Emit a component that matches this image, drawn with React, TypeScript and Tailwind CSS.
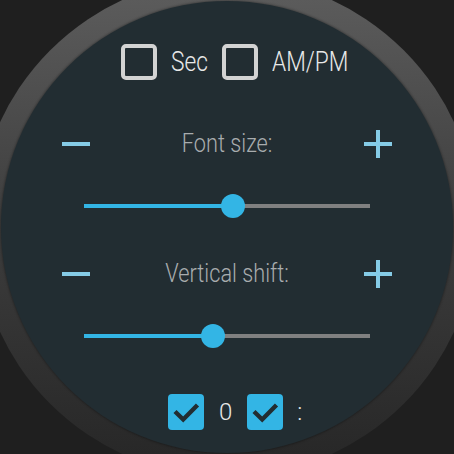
import React from 'react';

const font = { fontFamily: 'Roboto, "Liberation Sans", sans-serif' };

const EmptyBox = () => (
  <div className="w-[36px] h-[36px] rounded-[5px] border-[4px] border-[#d3d3d3] shrink-0" />
);

const CheckedBox = () => (
  <div className="w-[36px] h-[36px] rounded-[4px] bg-[#33b5e5] shrink-0">
    <svg width="36" height="36" viewBox="0 0 36 36">
      <path d="M7 17.5 L15.2 25.5 L29.5 11" fill="none" stroke="#222d32" strokeWidth="4.4" />
    </svg>
  </div>
);

const Minus = () => (
  <svg width="28" height="28" viewBox="0 0 28 28">
    <rect x="0" y="12" width="28" height="4" fill="#85cbe6" />
  </svg>
);

const Plus = () => (
  <svg width="28" height="28" viewBox="0 0 28 28">
    <rect x="0" y="12" width="28" height="4" fill="#85cbe6" />
    <rect x="12" y="0" width="4" height="28" fill="#85cbe6" />
  </svg>
);

// Control row: minus, label, plus
const StepRow = ({ label }: { label: string }) => (
  <div className="flex items-center h-[28px] pl-[61px] pr-[61px]">
    <Minus />
    <div className="flex-1 flex justify-center text-[25px] font-light text-[#a8acae] leading-none -mt-[2px] whitespace-nowrap">
      <span className="inline-block scale-x-[0.87]">{label}</span>
    </div>
    <Plus />
  </div>
);

const Slider = ({ value }: { value: number }) => (
  <div className="relative h-[24px] ml-[83px] w-[286px]">
    <div className="absolute left-0 right-0 top-[10px] h-[4px] bg-[#808080]" />
    <div className="absolute left-0 top-[10px] h-[4px] bg-[#33b5e5]" style={{ width: value }} />
    <div
      className="absolute top-0 w-[24px] h-[24px] rounded-full bg-[#33b5e5]"
      style={{ left: value - 12 }}
    />
  </div>
);

const Narrow = ({ w, children }: { w: string; children: React.ReactNode }) => (
  <span className={`${w} whitespace-nowrap text-[27px] font-light text-[#e8e8e8] leading-none`}>
    <span className="inline-block origin-left scale-x-[0.84]">{children}</span>
  </span>
);

export default function App() {
  return (
    <div className="w-[454px] h-[454px] relative overflow-hidden bg-[#1f1f1f]" style={font}>
      {/* bezel */}
      <div className="absolute left-[-23px] top-[-23px] w-[500px] h-[500px] rounded-full bg-gradient-to-b from-[#5e5e5e] via-[#3d3d3d] to-[#262626] flex items-center justify-center">
        <div className="w-[452px] h-[452px] rounded-full bg-[#222d32] shadow-[0_0_2px_1px_rgba(0,0,0,0.25)] flex flex-col">
          <div className="flex items-center h-[36px] mt-[43px] pl-[120px]">
            <EmptyBox />
            <div className="ml-[14px] w-[37px] flex">
              <Narrow w="w-[37px]">Sec</Narrow>
            </div>
            <div className="ml-[14px]">
              <EmptyBox />
            </div>
            <div className="ml-[14px] flex">
              <Narrow w="w-[76px]">AM/PM</Narrow>
            </div>
          </div>

          <div className="mt-[50px]">
            <StepRow label="Font size:" />
          </div>
          <div className="mt-[36px]">
            <Slider value={149} />
          </div>

          <div className="mt-[42px]">
            <StepRow label="Vertical shift:" />
          </div>
          <div className="mt-[36px]">
            <Slider value={129} />
          </div>

          <div className="flex items-center h-[36px] mt-[46px] pl-[167px]">
            <CheckedBox />
            <span className="ml-[15px] text-[24px] font-light text-[#e8e8e8] leading-none">0</span>
            <div className="ml-[15px]">
              <CheckedBox />
            </div>
            <span className="ml-[14px] text-[24px] font-light text-[#e8e8e8] leading-none">:</span>
          </div>
        </div>
      </div>
    </div>
  );
}
